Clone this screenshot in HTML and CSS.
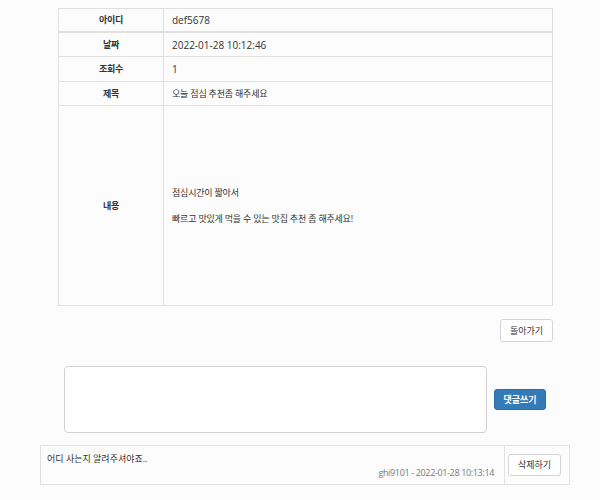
FILE: index.html
```html
<!DOCTYPE html>
<html lang="ko">
<head>
<meta charset="utf-8">
<title>게시글</title>
<link rel="stylesheet" href="styles.css">
</head>
<body>
<table class="post">
  <thead>
    <tr><th class="label">아이디</th><td class="value">def5678</td></tr>
  </thead>
  <tbody>
    <tr><th class="label">날짜</th><td class="value">2022-01-28 10:12:46</td></tr>
    <tr class="tall"><th class="label">조회수</th><td class="value">1</td></tr>
    <tr><th class="label">제목</th><td class="value ko">오늘 점심 추천좀 해주세요</td></tr>
    <tr class="content-row"><th class="label">내용</th><td class="value ko content">점심시간이 짧아서<br><br>빠르고 맛있게 먹을 수 있는 맛집 추천 좀 해주세요!</td></tr>
  </tbody>
</table>
<div class="actions"><button class="btn">돌아가기</button></div>
<div class="comment-form">
  <textarea class="comment-input"></textarea>
  <button class="btn btn-primary">댓글쓰기</button>
</div>
<table class="comments">
  <tr>
    <td class="comment-body">
      <div class="comment-text">어디 사는지 알려주셔야죠..</div>
      <div class="comment-meta">ghi9101 - 2022-01-28 10:13:14</div>
    </td>
    <td class="comment-action"><button class="btn">삭제하기</button></td>
  </tr>
</table>
</body>
</html>
```
FILE: styles.css
```css
html, body {
  margin: 0;
  padding: 0;
  background: #fbfcfb;
}
body {
  font-family: "Open Sans", "Noto Sans CJK KR", sans-serif;
  font-size: 10px;
  color: #333;
}
table {
  border-collapse: collapse;
}
.post {
  margin: 8px 0 0 58px;
  width: 495px;
  border: 1px solid #e0e1e0;
}
.post th, .post td {
  border: 1px solid #e0e1e0;
  height: 23px;
  padding: 0 8px;
  line-height: 14px;
  vertical-align: middle;
}
.post thead th, .post thead td {
  border-bottom: 2px solid #e0e1e0;
  height: 22px;
}
.post .tall th, .post .tall td {
  height: 24px;
}
.post .label {
  width: 88px;
  text-align: center;
  font-weight: bold;
  font-size: 9px;
  letter-spacing: -0.2px;
}
.post .value {
  text-align: left;
}
.post .ko {
  font-size: 9px;
  letter-spacing: -0.2px;
}
.post .content-row th, .post .content-row td {
  height: 199px;
}
.post .content {
  line-height: 13px;
}
.actions {
  width: 495px;
  margin: 13px 0 0 58px;
  display: flex;
  justify-content: flex-end;
}
.btn {
  font-family: "Open Sans", "Noto Sans CJK KR", sans-serif;
  font-size: 9px;
  color: #333;
  background: #fff;
  border: 1px solid #d4d5d4;
  border-radius: 3px;
  height: 23px;
  width: 53px;
  padding: 0;
  line-height: 20px;
  white-space: nowrap;
  cursor: pointer;
}
.btn-primary {
  background: #337ab7;
  border-color: #2e6da4;
  color: #fff;
  font-weight: bold;
  width: 52px;
  height: 21px;
  line-height: 18px;
}
.comment-form {
  display: flex;
  align-items: center;
  margin: 24px 0 0 64px;
  gap: 7px;
}
.comment-input {
  width: 423px;
  height: 67px;
  box-sizing: border-box;
  border: 1px solid #d0d1d0;
  border-radius: 4px;
  background: #fff;
  resize: none;
  margin: 0;
  padding: 4px;
}
.comments {
  margin: 12px 0 0 40px;
  width: 530px;
  border: 1px solid #e0e1e0;
}
.comments td {
  border: 1px solid #e0e1e0;
  height: 35px;
  vertical-align: middle;
}
.comment-body {
  padding: 1px 10px 2px 6px;
}
.comment-text {
  line-height: 15px;
  font-size: 9px;
}
.comment-meta {
  text-align: right;
  color: #7a7a7a;
  font-size: 9px;
  letter-spacing: -0.35px;
  line-height: 13px;
}
.comment-action {
  width: 57px;
  padding: 0 4px 0 3px;
}
.comment-action .btn {
  height: 22px;
}
```
